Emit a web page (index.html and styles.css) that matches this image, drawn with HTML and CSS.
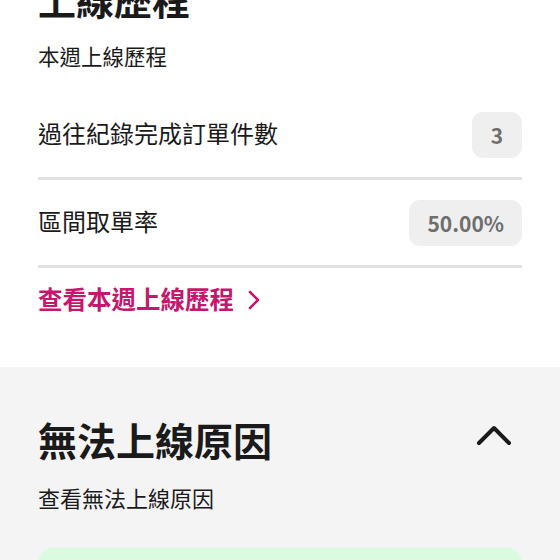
FILE: index.html
```html
<!DOCTYPE html>
<html lang="zh-Hant">
<head>
    <meta charset="UTF-8">
    <meta name="viewport" content="width=device-width, initial-scale=1.0">
    <title>上線歷程</title>
    <link rel="stylesheet" href="styles.css">
</head>
<body>
    <section class="panel">
        <h1 class="panel-title">上線歷程</h1>
        <p class="panel-sub">本週上線歷程</p>

        <div class="stat-row">
            <span class="stat-label">過往紀錄完成訂單件數</span>
            <span class="stat-badge">3</span>
        </div>
        <div class="stat-row">
            <span class="stat-label">區間取單率</span>
            <span class="stat-badge">50.00%</span>
        </div>

        <a class="panel-link" href="#">查看本週上線歷程
            <svg class="link-arrow" width="12" height="20" viewBox="0 0 12 20">
                <path d="M2 2 L10 10 L2 18" fill="none" stroke="currentColor" stroke-width="2.6" stroke-linecap="round" stroke-linejoin="round"/>
            </svg>
        </a>
    </section>

    <section class="panel panel-gray">
        <div class="panel-head">
            <h2 class="panel-title">無法上線原因</h2>
            <svg class="toggle" width="36" height="22" viewBox="0 0 36 22">
                <path d="M3 19 L18 4 L33 19" fill="none" stroke="#1a1a1a" stroke-width="4" stroke-linecap="round" stroke-linejoin="round"/>
            </svg>
        </div>
        <p class="panel-sub">查看無法上線原因</p>
        <div class="reason-card"></div>
    </section>
</body>
</html>
```

FILE: styles.css
```css
body {
    margin: 0;
    background-color: #fff;
    color: #1a1a1a;
    font-family: "Noto Sans CJK TC", "Noto Sans", sans-serif;
}

.panel {
    padding: 0 38px 53px;
}

.panel-title {
    margin: -25px 0 0;
    font-size: 38px;
    line-height: 48px;
    font-weight: 700;
}

.panel-sub {
    margin: 18px 0 0;
    font-size: 21.5px;
    line-height: 30px;
    font-weight: 400;
}

.stat-row {
    display: flex;
    align-items: center;
    justify-content: space-between;
    padding: 20px 0 19px;
    border-bottom: 3px solid #e2e2e2;
}

.stat-row:first-of-type {
    margin-top: 21px;
}

.stat-label {
    font-size: 24px;
    line-height: 34px;
    margin-top: -5px;
}

.stat-badge {
    min-width: 14px;
    padding: 0 18px;
    height: 46px;
    line-height: 46px;
    border-radius: 11px;
    background-color: #efefef;
    color: #6e6e6e;
    font-size: 21px;
    font-weight: 700;
    text-align: center;
}

.panel-link {
    display: flex;
    align-items: center;
    gap: 14px;
    margin-top: 16px;
    font-size: 24.5px;
    line-height: 30px;
    font-weight: 700;
    color: #c7166e;
    text-decoration: none;
}

.link-arrow {
    margin-top: 1px;
}

.panel-gray {
    background-color: #f4f4f4;
    padding-top: 48px;
    padding-bottom: 0;
}

.panel-gray .panel-title {
    margin: 0;
    font-size: 39px;
}

.panel-head {
    display: flex;
    align-items: center;
    justify-content: space-between;
}

.toggle {
    margin-right: 10px;
    margin-top: -8px;
}

.panel-gray .panel-sub {
    margin-top: 19px;
    font-size: 22px;
}

.reason-card {
    margin-top: 36px;
    height: 80px;
    border-radius: 16px;
    background-color: #dbfbe0;
}
```
